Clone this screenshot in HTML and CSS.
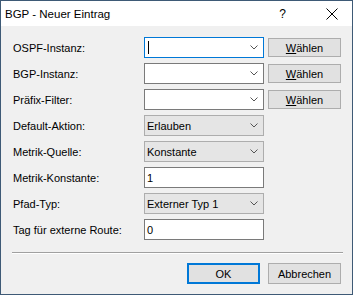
FILE: index.html
```html
<!DOCTYPE html>
<html>
<head>
<meta charset="utf-8">
<link rel="stylesheet" href="styles.css">
</head>
<body>
<div class="window">
  <div class="titlebar">
    <span class="title">BGP - Neuer Eintrag</span>
    <span class="help">?</span>
    <svg class="close" width="12" height="12" viewBox="0 0 12 12"><path d="M0.5 0.5 L11.5 11.5 M11.5 0.5 L0.5 11.5" stroke="#000" stroke-width="1" fill="none"/></svg>
  </div>
  <div class="body">
    <div class="form">
      <span class="label">OSPF-Instanz:</span>
      <div class="combo focus"><span class="caret"></span><svg class="chev" width="8" height="5" viewBox="0 0 8 5"><path d="M0.5 0.5 L4 4 L7.5 0.5" stroke="#555" fill="none"/></svg></div>
      <button class="btn pick"><u>W</u>ählen</button>

      <span class="label">BGP-Instanz:</span>
      <div class="combo"><svg class="chev" width="8" height="5" viewBox="0 0 8 5"><path d="M0.5 0.5 L4 4 L7.5 0.5" stroke="#555" fill="none"/></svg></div>
      <button class="btn pick"><u>W</u>ählen</button>

      <span class="label">Präfix-Filter:</span>
      <div class="combo"><svg class="chev" width="8" height="5" viewBox="0 0 8 5"><path d="M0.5 0.5 L4 4 L7.5 0.5" stroke="#555" fill="none"/></svg></div>
      <button class="btn pick"><u>W</u>ählen</button>

      <span class="label">Default-Aktion:</span>
      <div class="combo ro"><span class="val">Erlauben</span><svg class="chev" width="8" height="5" viewBox="0 0 8 5"><path d="M0.5 0.5 L4 4 L7.5 0.5" stroke="#555" fill="none"/></svg></div>
      <span></span>

      <span class="label">Metrik-Quelle:</span>
      <div class="combo ro"><span class="val">Konstante</span><svg class="chev" width="8" height="5" viewBox="0 0 8 5"><path d="M0.5 0.5 L4 4 L7.5 0.5" stroke="#555" fill="none"/></svg></div>
      <span></span>

      <span class="label">Metrik-Konstante:</span>
      <div class="edit"><span class="val">1</span></div>
      <span></span>

      <span class="label">Pfad-Typ:</span>
      <div class="combo ro"><span class="val">Externer Typ 1</span><svg class="chev" width="8" height="5" viewBox="0 0 8 5"><path d="M0.5 0.5 L4 4 L7.5 0.5" stroke="#555" fill="none"/></svg></div>
      <span></span>

      <span class="label">Tag für externe Route:</span>
      <div class="edit"><span class="val">0</span></div>
      <span></span>
    </div>
    <div class="sep"></div>
    <div class="buttons">
      <button class="btn ok">OK</button>
      <button class="btn">Abbrechen</button>
    </div>
  </div>
</div>
</body>
</html>
```
FILE: styles.css
```css
* { box-sizing: border-box; }
html, body { margin: 0; padding: 0; }
body {
  width: 353px;
  height: 295px;
  font-family: "Liberation Sans", Arial, sans-serif;
  font-size: 11px;
  color: #000;
}
.window {
  width: 353px;
  height: 295px;
  border: 1px solid #3e5a76;
  background: #f0f0f0;
  display: flex;
  flex-direction: column;
}
.titlebar {
  height: 25px;
  background: #fff;
  display: flex;
  align-items: center;
  padding-left: 4px;
}
.title {
  font-size: 11.5px;
  flex: 1;
  padding-top: 1px;
}
.help {
  font-size: 12px;
  margin-right: 40px;
  padding-top: 1px;
}
.close {
  margin-right: 14px;
}
.body {
  flex: 1;
  padding: 11px 11px 0 11px;
  display: flex;
  flex-direction: column;
}
.form {
  display: grid;
  grid-template-columns: 128px 120px 73px;
  grid-auto-rows: 21px;
  row-gap: 5px;
  column-gap: 4px;
}
.label {
  display: flex;
  align-items: center;
  padding-left: 1px;
  white-space: nowrap;
}
.combo, .edit {
  position: relative;
  height: 21px;
  border: 1px solid #7a7a7a;
  background: #fff;
  display: flex;
  align-items: center;
  padding-left: 2px;
}
.combo.focus { border-color: #0078d7; }
.combo.ro {
  background: #e5e5e5;
  border-color: #adadad;
}
.caret {
  width: 1px;
  height: 13px;
  background: #000;
  margin-left: 1px;
}
.chev {
  position: absolute;
  right: 5px;
  top: 7px;
}
.btn {
  font-family: "Liberation Sans", Arial, sans-serif;
  font-size: 11px;
  color: #000;
  background: #e1e1e1;
  border: 1px solid #adadad;
  padding: 0;
  margin: 0;
}
.btn u { text-decoration: underline; text-underline-offset: 1px; }
.pick {
  height: 19px;
  align-self: center;
}
.sep {
  margin-top: 12px;
  width: 331px;
  height: 2px;
  border-top: 1px solid #a0a0a0;
  border-bottom: 1px solid #fff;
}
.buttons {
  margin-top: 9px;
  display: flex;
  justify-content: flex-end;
  gap: 8px;
}
.buttons .btn {
  width: 73px;
  height: 21px;
}
.ok {
  border: 2px solid #0078d7;
}
```
